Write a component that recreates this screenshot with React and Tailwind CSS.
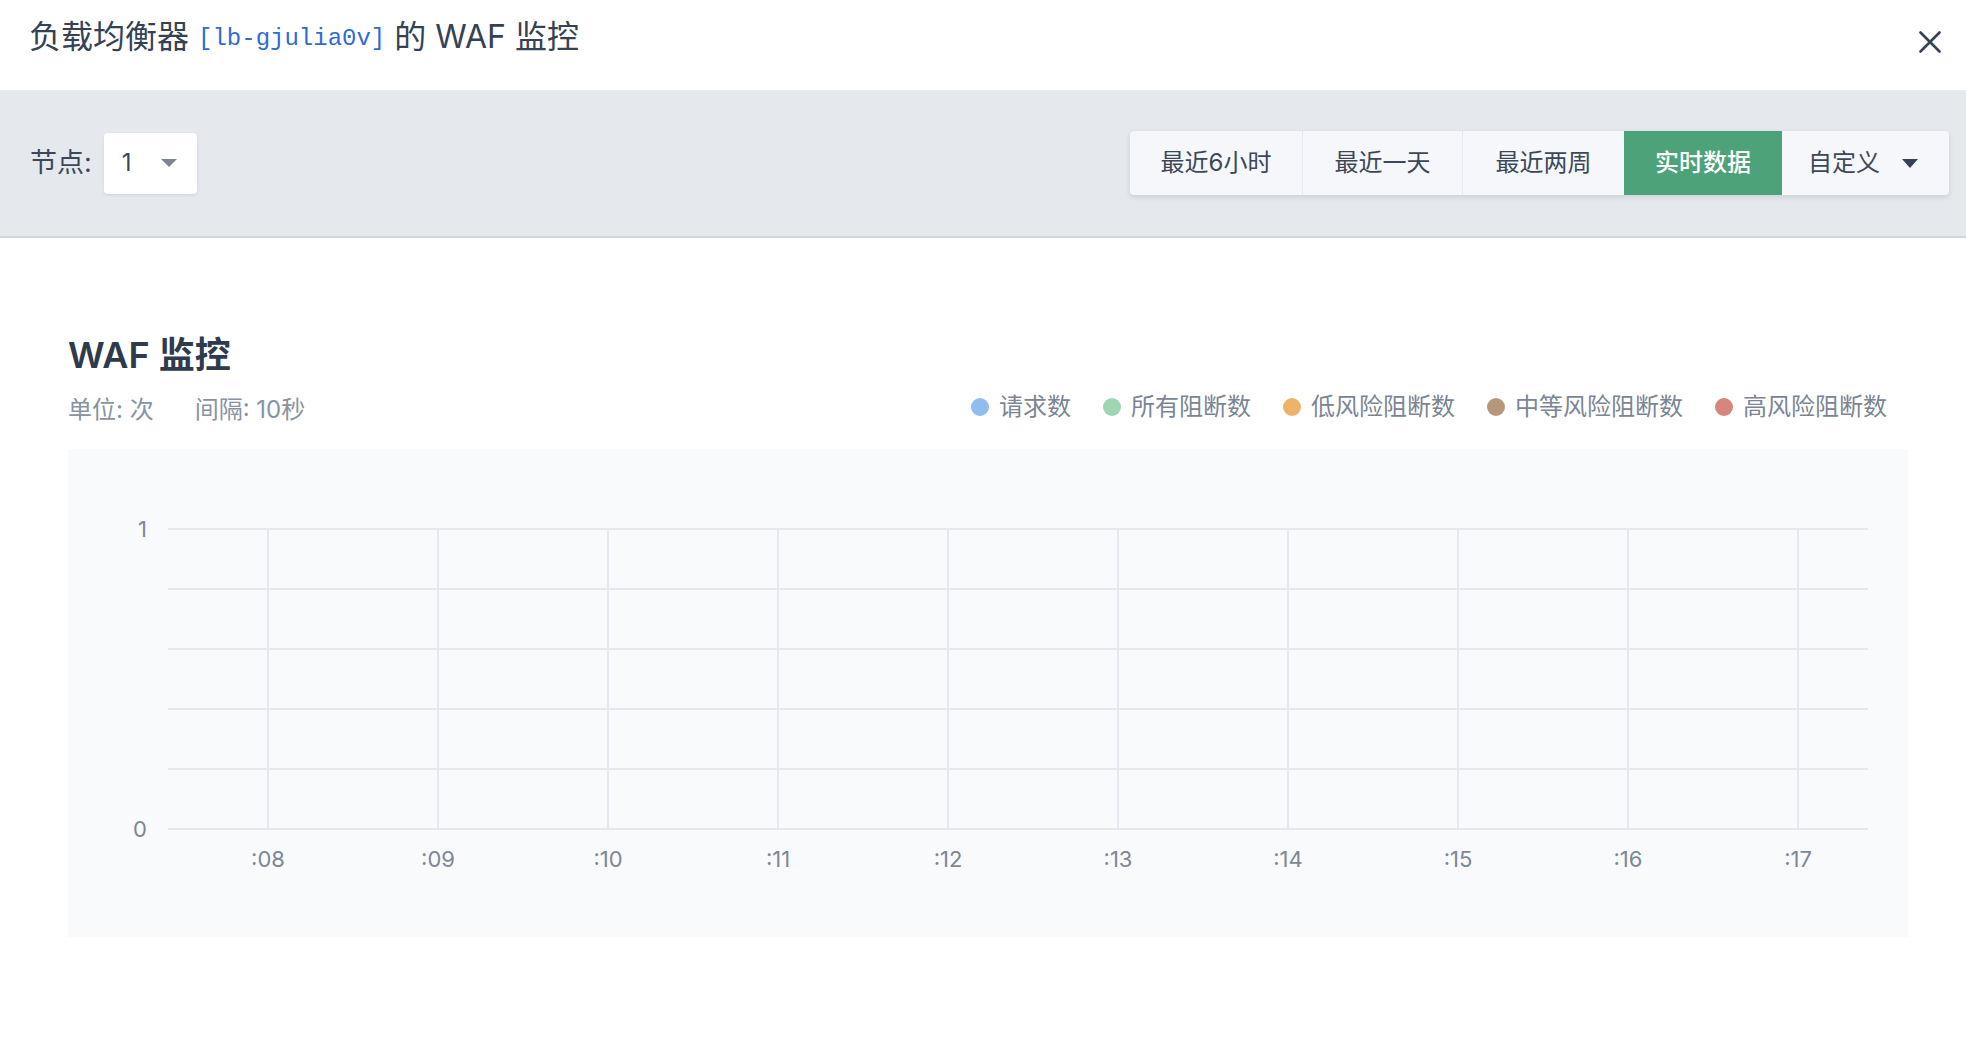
import React, { useState } from 'react';

const ranges = [
  { id: '6h', label: '最近6小时', width: 'w-[173px]' },
  { id: '1d', label: '最近一天', width: 'w-[160px]' },
  { id: '2w', label: '最近两周', width: 'w-[161px]' },
  { id: 'rt', label: '实时数据', width: 'w-[158px]' },
];

const legend = [
  { label: '请求数', color: 'bg-[#8ebdee]' },
  { label: '所有阻断数', color: 'bg-[#9dd6b1]' },
  { label: '低风险阻断数', color: 'bg-[#ecb469]' },
  { label: '中等风险阻断数', color: 'bg-[#b5987a]' },
  { label: '高风险阻断数', color: 'bg-[#d6857f]' },
];

const ticks = [':08', ':09', ':10', ':11', ':12', ':13', ':14', ':15', ':16', ':17'];

// empty chart: grid + axis labels only, no series data yet
const WafChart = () => {
  const rows = [80, 140, 200, 260, 320, 380];
  return (
    <svg width="1840" height="488" className="block">
      {rows.map(y => (
        <line key={y} x1="100" x2="1800" y1={y} y2={y} stroke="#e4e9ef" strokeWidth="2" />
      ))}
      {ticks.map((t, i) => (
        <line key={t} x1={200 + 170 * i} x2={200 + 170 * i} y1="80" y2="380" stroke="#e4e9ef" strokeWidth="2" />
      ))}
      <g fill="#7d8795" fontSize="22" fontFamily="Inter, 'Noto Sans CJK SC', sans-serif">
        <text x="79" y="80" textAnchor="end" dominantBaseline="central">1</text>
        <text x="79" y="380" textAnchor="end" dominantBaseline="central">0</text>
        {ticks.map((t, i) => (
          <text key={t} x={200 + 170 * i} y="410" textAnchor="middle" dominantBaseline="central">{t}</text>
        ))}
      </g>
    </svg>
  );
};

const App = () => {
  const [range, setRange] = useState('rt');

  return (
    <div className="w-[1966px] min-h-[1064px] bg-white font-['Inter','Noto_Sans_CJK_SC',sans-serif] text-[#354254]">
      {/* header */}
      <div className="h-[90px] flex items-start justify-between pl-[29px] pr-[25px]">
        <h1 className="mt-[22px] text-[32px] leading-[30px] font-normal whitespace-nowrap">
          负载均衡器{' '}
          <span className="align-[3px] font-['Liberation_Mono','DejaVu_Sans_Mono',monospace] text-[24px] text-[#2f6bd0]">[lb-gjulia0v]</span>
          {' '}的 WAF 监控
        </h1>
        <button className="mt-[31px] w-[22px] h-[22px] flex items-center justify-center">
          <svg width="22" height="22" viewBox="0 0 22 22">
            <path d="M1.5 1.5 L20.5 20.5 M20.5 1.5 L1.5 20.5" stroke="#354254" strokeWidth="2.6" strokeLinecap="round" />
          </svg>
        </button>
      </div>

      {/* toolbar */}
      <div className="h-[148px] bg-[#e5e9ee] border-b-2 border-[#cdd5df] flex items-center justify-between pl-[30px] pr-[17px]">
        <div className="flex items-center gap-[12px]">
          <span className="text-[27px] text-[#3c4858]">节点:</span>
          <div className="w-[93px] h-[61px] bg-white rounded-[4px] shadow-[0_1px_3px_rgba(30,50,80,0.12)] flex items-center justify-between pl-[18px] pr-[20px]">
            <span className="text-[24px] text-[#3c4858]">1</span>
            <svg width="16" height="8" viewBox="0 0 16 8">
              <path d="M0 0 L16 0 L8 8 Z" fill="#7c8591" />
            </svg>
          </div>
        </div>

        <div className="flex h-[64px] bg-[#f5f7fa] rounded-[4px] shadow-[0_2px_5px_rgba(30,50,80,0.13)] overflow-hidden">
          {ranges.map((r, idx) => {
            const active = range === r.id;
            return (
              <button
                key={r.id}
                onClick={() => setRange(r.id)}
                className={`${r.width} h-full flex items-center justify-center text-[24px] ${
                  active
                    ? 'bg-[#4ea27a] text-white font-medium'
                    : `text-[#3c4858] ${idx < 2 ? 'border-r border-[#e6eaf0]' : ''}`
                }`}
              >
                {r.label}
              </button>
            );
          })}
          <button className="w-[167px] h-full flex items-center justify-between pl-[26px] pr-[31px] text-[24px] text-[#3c4858]">
            <span>自定义</span>
            <svg width="16" height="9" viewBox="0 0 16 9">
              <path d="M0 0 L16 0 L8 9 Z" fill="#354254" />
            </svg>
          </button>
        </div>
      </div>

      {/* chart section */}
      <div className="pl-[68px] pr-[58px] pt-[97px]">
        <h2 className="text-[36px] leading-[40px] font-semibold text-[#2f3b4c]">WAF 监控</h2>
        <div className="mt-[17px] flex items-center justify-between h-[30px] pr-[21px]">
          <div className="pt-[6px] flex items-center gap-[41px] text-[24px] text-[#8893a2]">
            <span>单位: 次</span>
            <span>间隔: 10秒</span>
          </div>
          <div className="flex items-center gap-[32px]">
            {legend.map(l => (
              <div key={l.label} className="flex items-center gap-[10px]">
                <span className={`w-[18px] h-[18px] rounded-full ${l.color}`} />
                <span className="text-[24px] text-[#7b8594]">{l.label}</span>
              </div>
            ))}
          </div>
        </div>
        <div className="mt-[27px] w-[1840px] h-[488px] bg-[#f8fafc]">
          <WafChart />
        </div>
      </div>
    </div>
  );
};

export default App;
